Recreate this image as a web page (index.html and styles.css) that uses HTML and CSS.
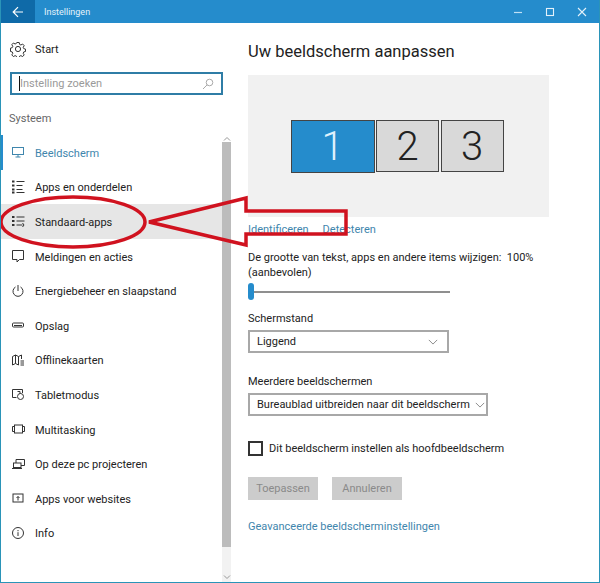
FILE: index.html

```html
<!DOCTYPE html>
<html lang="nl">
<head>
  <meta charset="UTF-8">
  <title>Instellingen</title>
  <link rel="stylesheet" href="styles.css">
</head>
<body>
  <div class="window">
    <header class="titlebar">
      <div class="back">
        <svg width="12" height="12" viewBox="0 0 12 12"><path d="M11 6H1.500M6 1.200 1.200 6 6 10.800" fill="none" stroke="#fff" stroke-width="1.200"/></svg>
      </div>
      <span class="title">Instellingen</span>
      <div class="controls">
        <svg width="10" height="10" viewBox="0 0 10 10"><path d="M1 5.500h8" stroke="#bfe0f5" stroke-width="1.200"/></svg>
        <svg width="10" height="10" viewBox="0 0 10 10"><rect x="1.500" y="1.500" width="7" height="7" fill="none" stroke="#e3f1fa" stroke-width="1.100"/></svg>
        <svg width="10" height="10" viewBox="0 0 10 10"><path d="M1 1l8 8M9 1 1 9" stroke="#e3f1fa" stroke-width="1.100"/></svg>
      </div>
    </header>

    <div class="content">
      <aside class="sidebar">
        <div class="start">
          <svg class="icon" viewBox="0 0 16 16"><circle cx="8" cy="8" r="2.600"/><path d="M6.800 1.500h2.400l.4 1.900 1.300.6 1.700-1 1.600 1.700-1 1.600.6 1.400 1.700.4v2.400l-1.700.4-.6 1.400 1 1.600-1.600 1.700-1.700-1-1.300.6-.4 1.900H6.800l-.4-1.900-1.300-.6-1.700 1-1.600-1.700 1-1.600-.6-1.400-1.700-.4V7.100l1.700-.4.600-1.400-1-1.600 1.600-1.700 1.700 1 1.300-.6z"/></svg>
          <span>Start</span>
        </div>
        <div class="search">
          <span class="caret"></span>
          <span class="placeholder">Instelling zoeken</span>
          <svg class="search-icon" viewBox="0 0 12 12"><circle cx="7.500" cy="4.500" r="3.300"/><path d="M5.200 6.800 1 11"/></svg>
        </div>
        <div class="group-label">Systeem</div>

        <div class="nav-wrap">
          <nav class="nav">
            <a class="nav-item active">
              <svg class="icon" viewBox="0 0 16 16"><rect x="2.500" y="3.500" width="11" height="7"/><path d="M8 10.500v2.500M5.500 13h5"/></svg>
              <span>Beeldscherm</span>
            </a>
            <a class="nav-item">
              <svg class="icon" viewBox="0 0 16 16"><path d="M2 2.500h2.500M2 6.500h2.500M2 10.500h2.500M2 13.500h2.500" stroke-width="2"/><path d="M6.500 2.500h8M6.500 6.500h6M6.500 10.500h6M6.500 13.500h8"/></svg>
              <span>Apps en onderdelen</span>
            </a>
            <a class="nav-item selected">
              <svg class="icon" viewBox="0 0 16 16"><path d="M2 4h2.500M2 8h2.500M2 12h2.500" stroke-width="2"/><path d="M6.500 4h8M6.500 8h8M6.500 12h6"/><path d="M12.500 10l1.500 2-1.500 2"/></svg>
              <span>Standaard-apps</span>
            </a>
            <a class="nav-item">
              <svg class="icon" viewBox="0 0 16 16"><path d="M2.500 2.500h11v9H9.500L7 14v-2.500H2.500z"/></svg>
              <span>Meldingen en acties</span>
            </a>
            <a class="nav-item">
              <svg class="icon" viewBox="0 0 16 16"><path d="M5.500 4a5 5 0 1 0 5 0M8 2v6"/></svg>
              <span>Energiebeheer en slaapstand</span>
            </a>
            <a class="nav-item">
              <svg class="icon" viewBox="0 0 16 16"><rect x="2.500" y="6" width="11" height="4" rx="1"/><path d="M4 8.500h8"/></svg>
              <span>Opslag</span>
            </a>
            <a class="nav-item">
              <svg class="icon" viewBox="0 0 16 16"><path d="M2.500 4.500 5.500 3l3 1.500L11.500 3v4M2.500 4.500V13l3-1.500 3 1.500M5.500 3v8.500M8.500 4.500V13M10.500 9h3.500M10.500 11h3.500M10.500 13h3.500"/></svg>
              <span>Offlinekaarten</span>
            </a>
            <a class="nav-item">
              <svg class="icon" viewBox="0 0 16 16"><path d="M6.500 11.500h-4v-8h10V7"/><circle cx="10.500" cy="10.500" r="3"/><path d="M7.500 5.500h2.500V8"/></svg>
              <span>Tabletmodus</span>
            </a>
            <a class="nav-item">
              <svg class="icon" viewBox="0 0 16 16"><rect x="4.500" y="4" width="8" height="8"/><path d="M4.500 5.500h-2v5h2M12.500 5.500h2v5h-2"/></svg>
              <span>Multitasking</span>
            </a>
            <a class="nav-item">
              <svg class="icon" viewBox="0 0 16 16"><path d="M6 7V3.500h8.500V9.500H11"/><rect x="3.500" y="7" width="7.500" height="4.500"/><path d="M2 12.500h10"/></svg>
              <span>Op deze pc projecteren</span>
            </a>
            <a class="nav-item">
              <svg class="icon" viewBox="0 0 16 16"><rect x="3" y="4" width="10" height="8"/><path d="M8 10.500V6.500M6.500 8l1.500-1.500L9.500 8"/></svg>
              <span>Apps voor websites</span>
            </a>
            <a class="nav-item">
              <svg class="icon" viewBox="0 0 16 16"><circle cx="8" cy="8" r="5.500"/><path d="M8 7.200v3.800M8 5v1.200"/></svg>
              <span>Info</span>
            </a>
          </nav>
          <div class="scrollbar">
            <svg class="arrow" viewBox="0 0 8 6"><path d="M1 4.500 4 1.500l3 3"/></svg>
            <div class="thumb"></div>
            <div class="track"><svg class="arrow" viewBox="0 0 8 6"><path d="M1 1.500l3 3 3-3"/></svg></div>
          </div>
        </div>
      </aside>

      <main class="main">
        <h1>Uw beeldscherm aanpassen</h1>
        <div class="preview">
          <div class="monitor primary">1</div>
          <div class="monitor">2</div>
          <div class="monitor">3</div>
        </div>
        <div class="links">
          <a>Identificeren</a>
          <a>Detecteren</a>
        </div>
        <p class="scale-text">De grootte van tekst, apps en andere items wijzigen:&nbsp; 100%<br>(aanbevolen)</p>
        <div class="slider"><span class="slider-thumb"></span></div>

        <label class="field-label">Schermstand</label>
        <div class="select select-short">
          <span>Liggend</span>
          <svg class="chevron" viewBox="0 0 12 7"><path d="M1 1l5 5 5-5"/></svg>
        </div>

        <label class="field-label second">Meerdere beeldschermen</label>
        <div class="select select-long">
          <span>Bureaublad uitbreiden naar dit beeldscherm</span>
          <svg class="chevron" viewBox="0 0 12 7"><path d="M1 1l5 5 5-5"/></svg>
        </div>

        <div class="check-row">
          <span class="checkbox"></span>
          <span>Dit beeldscherm instellen als hoofdbeeldscherm</span>
        </div>

        <div class="buttons">
          <button class="btn">Toepassen</button>
          <button class="btn">Annuleren</button>
        </div>

        <a class="advanced">Geavanceerde beeldscherminstellingen</a>
      </main>
    </div>

    <!-- rode markering over het venster -->
    <svg class="callout" width="600" height="583" viewBox="0 0 600 583">
      <ellipse cx="72" cy="222" rx="72" ry="25"/>
      <path d="M148 222 245 198V211H345V234H245V245Z"/>
    </svg>
  </div>
</body>
</html>
```

FILE: styles.css

```css
* {
  box-sizing: border-box;
}

html, body {
  margin: 0;
  height: 100%;
}

body {
  font-family: Roboto, "Open Sans", sans-serif;
  font-size: 11px;
  color: #222;
  background: #fff;
}

.window {
  position: relative;
  width: 600px;
  height: 583px;
  border: 1px solid #2a94b8;
  border-top: 0;
  overflow: hidden;
}

.titlebar {
  display: flex;
  align-items: center;
  height: 23px;
  background: #258ccc;
  color: #e6f3fb;
}

.back {
  display: flex;
  align-items: center;
  justify-content: center;
  width: 35px;
  height: 23px;
  margin-left: -1px;
  background: #0f6aa8;
}

.title {
  margin-left: 9px;
  font-size: 9px;
}

.controls {
  display: flex;
  align-items: center;
  gap: 22px;
  margin-left: auto;
  padding-right: 12px;
}

.controls svg {
  display: block;
}

.content {
  display: flex;
}

.sidebar {
  width: 230px;
  flex-shrink: 0;
}

.icon {
  width: 16px;
  height: 16px;
  flex-shrink: 0;
  fill: none;
  stroke: #333;
  stroke-width: 1;
}

.start {
  display: flex;
  align-items: center;
  gap: 9px;
  height: 20px;
  margin-top: 16px;
  padding-left: 9px;
}

.search {
  display: flex;
  align-items: center;
  width: 213px;
  height: 23px;
  margin: 13px 0 0 9px;
  padding: 0 7px;
  border: 2px solid #2f7da6;
}

.caret {
  width: 1px;
  height: 15px;
  background: #111;
}

.placeholder {
  color: #9a9a9a;
}

.search-icon {
  width: 12px;
  height: 12px;
  margin-left: auto;
  fill: none;
  stroke: #aaa;
}

.group-label {
  height: 18px;
  margin: 15px 0 0 8px;
  color: #666;
  line-height: 18px;
}

.nav-wrap {
  display: flex;
  height: 447px;
  margin-top: 7px;
}

.nav {
  width: 221px;
}

.nav-item {
  display: flex;
  align-items: center;
  gap: 9px;
  height: 34.600px;
  padding-left: 9px;
}

.nav-item span {
  padding-top: 2px;
}

.active {
  color: #3f86ad;
  box-shadow: inset 3px 0 0 -1px #258ccc;
}

.active .icon {
  stroke: #3f86ad;
}

.selected {
  background: #e6e6e6;
}

.scrollbar {
  display: flex;
  flex-direction: column;
  width: 9px;
}

.arrow {
  display: block;
  width: 8px;
  height: 6px;
  margin: 1px auto 0;
  fill: none;
  stroke: #999;
}

.thumb {
  height: 405px;
  background: #bcbcbc;
}

.track {
  display: flex;
  flex: 1;
  align-items: flex-end;
  padding-bottom: 2px;
  background: #f2f2f2;
}

.main {
  flex: 1;
  padding-left: 17px;
}

h1 {
  margin: 16px 0 0;
  font-size: 16.500px;
  font-weight: 400;
  line-height: 26px;
  color: #222;
}

.preview {
  display: flex;
  align-items: center;
  justify-content: center;
  gap: 1.500px;
  width: 301px;
  height: 142px;
  margin-top: 10px;
  padding-right: 3px;
  background: #f1f1f1;
}

.monitor {
  display: flex;
  align-items: center;
  justify-content: center;
  width: 63px;
  height: 52px;
  border: 1px solid #444;
  background: #d9d9d9;
  font-size: 40px;
  font-weight: 300;
  color: #222;
}

.primary {
  width: 84px;
  height: 53px;
  background: #258ccc;
  color: #dff1fc;
}

.links {
  display: flex;
  gap: 14px;
  height: 16px;
  margin-top: 5px;
  color: #3f86ad;
  line-height: 16px;
}

.scale-text {
  margin: 12px 0 0;
  line-height: 15px;
}

.slider {
  position: relative;
  width: 202px;
  height: 2px;
  margin-top: 11px;
  background: #8f8f8f;
}

.slider-thumb {
  position: absolute;
  left: 0;
  top: -8px;
  width: 6px;
  height: 17px;
  border-radius: 3px;
  background: #258ccc;
}

.field-label {
  display: block;
  height: 16px;
  margin-top: 18px;
  line-height: 16px;
}

.second {
  margin-top: 21px;
}

.select {
  display: flex;
  align-items: center;
  justify-content: space-between;
  height: 23px;
  margin-top: 3px;
  padding: 0 9px 0 7px;
  border: 2px solid #a8a8a8;
  white-space: nowrap;
}

.select-short {
  width: 201px;
}

.select-long {
  width: 240px;
  padding-right: 1px;
}

.chevron {
  width: 10px;
  height: 6px;
  flex-shrink: 0;
  fill: none;
  stroke: #777;
}

.check-row {
  display: flex;
  align-items: center;
  gap: 6px;
  height: 15px;
  margin-top: 25px;
}

.checkbox {
  width: 15px;
  height: 15px;
  border: 2px solid #333;
}

.buttons {
  display: flex;
  gap: 14px;
  margin-top: 21px;
}

.btn {
  width: 70px;
  height: 23px;
  padding: 0;
  border: 0;
  background: #cccccc;
  color: #8a8a8a;
  font: inherit;
}

.advanced {
  display: block;
  margin-top: 19px;
  color: #3f86ad;
  line-height: 16px;
}

.callout {
  position: absolute;
  left: 0;
  top: 0;
  fill: none;
  stroke: #d0121f;
  stroke-width: 3.500;
  pointer-events: none;
}
```
